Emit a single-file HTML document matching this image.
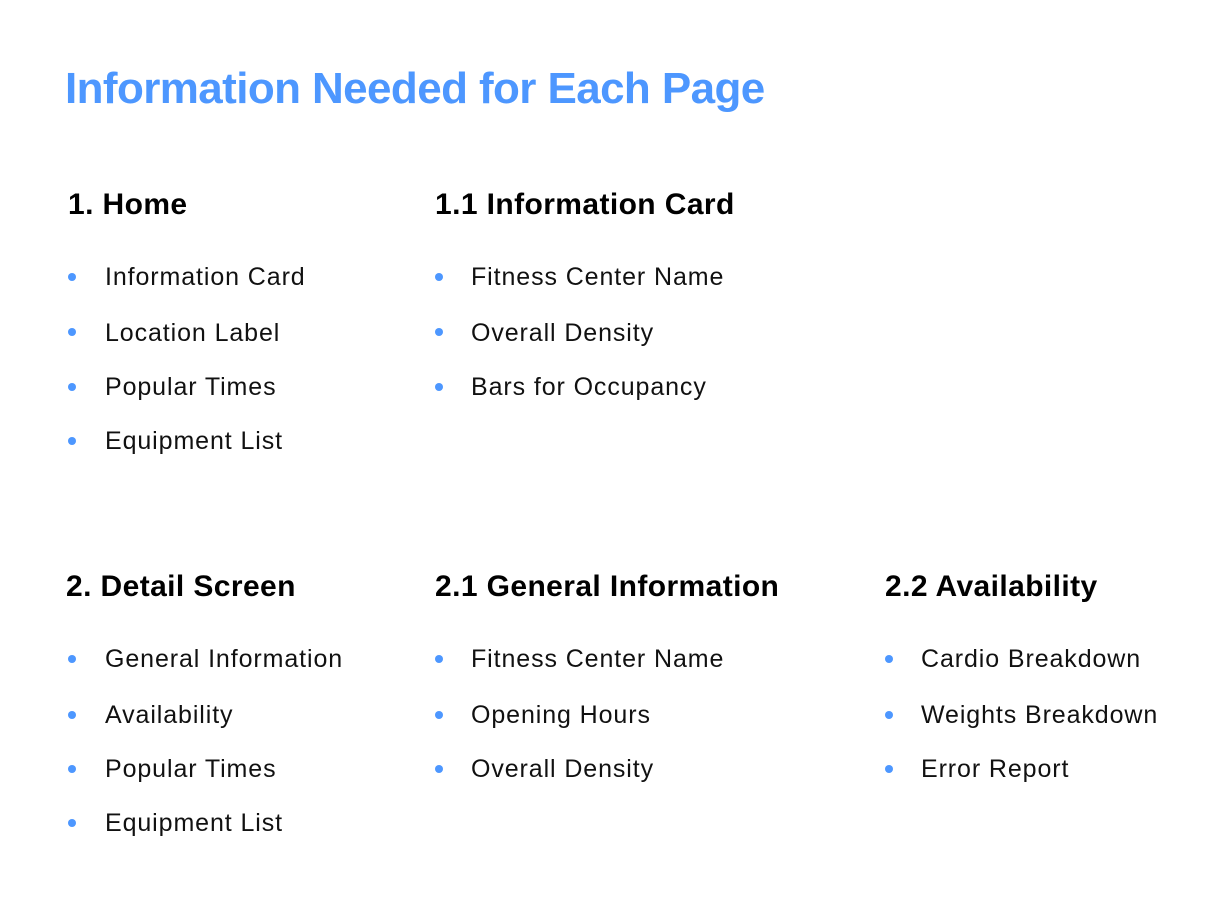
<!DOCTYPE html>
<html><head><meta charset="utf-8"><style>
html,body{margin:0;padding:0;background:#fff;width:1210px;height:908px;overflow:hidden;position:relative;font-family:"Liberation Sans",sans-serif;}
.t{position:absolute;left:65px;top:63px;font-size:44px;font-weight:bold;color:#4d97ff;line-height:52px;letter-spacing:-0.6px;white-space:nowrap}
.h{position:absolute;font-size:30px;font-weight:bold;color:#000;line-height:36px;letter-spacing:0.4px;white-space:nowrap}
.i{position:absolute;font-size:25px;color:#111;line-height:30px;white-space:nowrap;letter-spacing:0.9px}
.b{position:absolute;width:8px;height:8px;border-radius:50%;background:#4d97ff}
</style></head><body>
<div class="t">Information Needed for Each Page</div>

<div class="h" style="left:68px;top:187px">1. Home</div>
<div class="h" style="left:435px;top:187px">1.1 Information Card</div>
<div class="h" style="left:66px;top:569px">2. Detail Screen</div>
<div class="h" style="left:435px;top:569px">2.1 General Information</div>
<div class="h" style="left:885px;top:569px">2.2 Availability</div>

<div class="b" style="left:68px;top:273px"></div><div class="i" style="left:105px;top:262px">Information Card</div>
<div class="b" style="left:68px;top:328px"></div><div class="i" style="left:105px;top:318px">Location Label</div>
<div class="b" style="left:68px;top:383px"></div><div class="i" style="left:105px;top:372px">Popular Times</div>
<div class="b" style="left:68px;top:437px"></div><div class="i" style="left:105px;top:426px">Equipment List</div>

<div class="b" style="left:435px;top:273px"></div><div class="i" style="left:471px;top:262px">Fitness Center Name</div>
<div class="b" style="left:435px;top:328px"></div><div class="i" style="left:471px;top:318px">Overall Density</div>
<div class="b" style="left:435px;top:383px"></div><div class="i" style="left:471px;top:372px">Bars for Occupancy</div>

<div class="b" style="left:68px;top:655px"></div><div class="i" style="left:105px;top:644px">General Information</div>
<div class="b" style="left:68px;top:711px"></div><div class="i" style="left:105px;top:700px">Availability</div>
<div class="b" style="left:68px;top:765px"></div><div class="i" style="left:105px;top:754px">Popular Times</div>
<div class="b" style="left:68px;top:819px"></div><div class="i" style="left:105px;top:808px">Equipment List</div>

<div class="b" style="left:435px;top:655px"></div><div class="i" style="left:471px;top:644px">Fitness Center Name</div>
<div class="b" style="left:435px;top:711px"></div><div class="i" style="left:471px;top:700px">Opening Hours</div>
<div class="b" style="left:435px;top:765px"></div><div class="i" style="left:471px;top:754px">Overall Density</div>

<div class="b" style="left:885px;top:655px"></div><div class="i" style="left:921px;top:644px">Cardio Breakdown</div>
<div class="b" style="left:885px;top:711px"></div><div class="i" style="left:921px;top:700px">Weights Breakdown</div>
<div class="b" style="left:885px;top:765px"></div><div class="i" style="left:921px;top:754px">Error Report</div>
</body></html>
